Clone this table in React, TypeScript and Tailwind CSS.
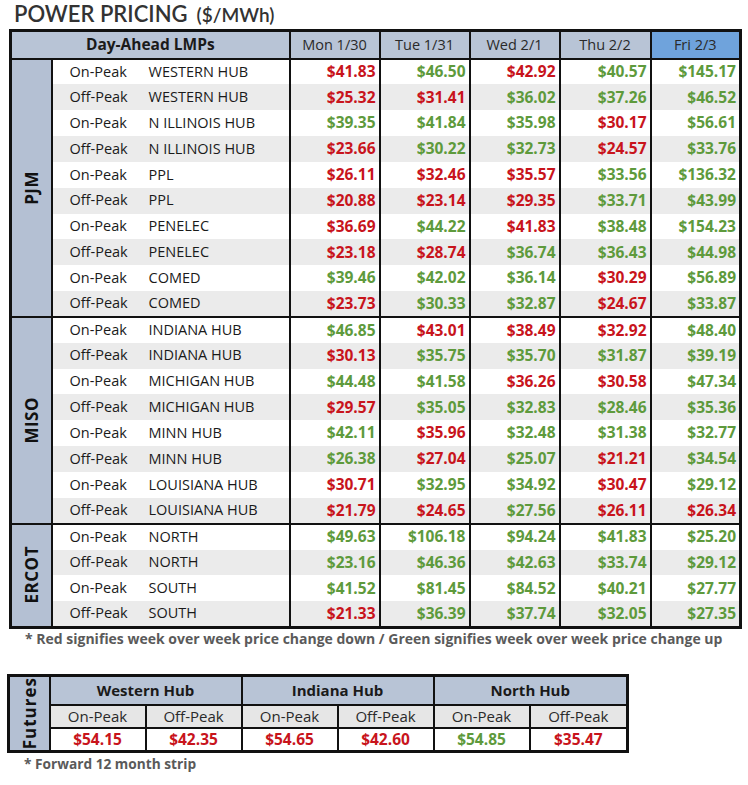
import React from "react";

type Row = { peak: string; hub: string; vals: [string, "r" | "g"][] };

const R = "r" as const;
const G = "g" as const;

const groups: { name: string; rows: Row[] }[] = [
  {
    name: "PJM",
    rows: [
      { peak: "On-Peak", hub: "WESTERN HUB", vals: [["$41.83", R], ["$46.50", G], ["$42.92", R], ["$40.57", G], ["$145.17", G]] },
      { peak: "Off-Peak", hub: "WESTERN HUB", vals: [["$25.32", R], ["$31.41", R], ["$36.02", G], ["$37.26", G], ["$46.52", G]] },
      { peak: "On-Peak", hub: "N ILLINOIS HUB", vals: [["$39.35", G], ["$41.84", G], ["$35.98", G], ["$30.17", R], ["$56.61", G]] },
      { peak: "Off-Peak", hub: "N ILLINOIS HUB", vals: [["$23.66", R], ["$30.22", G], ["$32.73", G], ["$24.57", R], ["$33.76", G]] },
      { peak: "On-Peak", hub: "PPL", vals: [["$26.11", R], ["$32.46", R], ["$35.57", R], ["$33.56", G], ["$136.32", G]] },
      { peak: "Off-Peak", hub: "PPL", vals: [["$20.88", R], ["$23.14", R], ["$29.35", R], ["$33.71", G], ["$43.99", G]] },
      { peak: "On-Peak", hub: "PENELEC", vals: [["$36.69", R], ["$44.22", G], ["$41.83", R], ["$38.48", G], ["$154.23", G]] },
      { peak: "Off-Peak", hub: "PENELEC", vals: [["$23.18", R], ["$28.74", R], ["$36.74", G], ["$36.43", G], ["$44.98", G]] },
      { peak: "On-Peak", hub: "COMED", vals: [["$39.46", G], ["$42.02", G], ["$36.14", G], ["$30.29", R], ["$56.89", G]] },
      { peak: "Off-Peak", hub: "COMED", vals: [["$23.73", R], ["$30.33", G], ["$32.87", G], ["$24.67", R], ["$33.87", G]] },
    ],
  },
  {
    name: "MISO",
    rows: [
      { peak: "On-Peak", hub: "INDIANA HUB", vals: [["$46.85", G], ["$43.01", R], ["$38.49", R], ["$32.92", R], ["$48.40", G]] },
      { peak: "Off-Peak", hub: "INDIANA HUB", vals: [["$30.13", R], ["$35.75", G], ["$35.70", G], ["$31.87", G], ["$39.19", G]] },
      { peak: "On-Peak", hub: "MICHIGAN HUB", vals: [["$44.48", G], ["$41.58", G], ["$36.26", R], ["$30.58", R], ["$47.34", G]] },
      { peak: "Off-Peak", hub: "MICHIGAN HUB", vals: [["$29.57", R], ["$35.05", G], ["$32.83", G], ["$28.46", G], ["$35.36", G]] },
      { peak: "On-Peak", hub: "MINN HUB", vals: [["$42.11", G], ["$35.96", R], ["$32.48", G], ["$31.38", G], ["$32.77", G]] },
      { peak: "Off-Peak", hub: "MINN HUB", vals: [["$26.38", G], ["$27.04", R], ["$25.07", G], ["$21.21", R], ["$34.54", G]] },
      { peak: "On-Peak", hub: "LOUISIANA HUB", vals: [["$30.71", R], ["$32.95", G], ["$34.92", G], ["$30.47", R], ["$29.12", G]] },
      { peak: "Off-Peak", hub: "LOUISIANA HUB", vals: [["$21.79", R], ["$24.65", R], ["$27.56", G], ["$26.11", R], ["$26.34", R]] },
    ],
  },
  {
    name: "ERCOT",
    rows: [
      { peak: "On-Peak", hub: "NORTH", vals: [["$49.63", G], ["$106.18", G], ["$94.24", G], ["$41.83", G], ["$25.20", G]] },
      { peak: "Off-Peak", hub: "NORTH", vals: [["$23.16", G], ["$46.36", G], ["$42.63", G], ["$33.74", G], ["$29.12", G]] },
      { peak: "On-Peak", hub: "SOUTH", vals: [["$41.52", G], ["$81.45", G], ["$84.52", G], ["$40.21", G], ["$27.77", G]] },
      { peak: "Off-Peak", hub: "SOUTH", vals: [["$21.33", R], ["$36.39", G], ["$37.74", G], ["$32.05", G], ["$27.35", G]] },
    ],
  },
];

const days = ["Mon 1/30", "Tue 1/31", "Wed 2/1", "Thu 2/2", "Fri 2/3"];

const futures: { hub: string; on: [string, "r" | "g"]; off: [string, "r" | "g"] }[] = [
  { hub: "Western Hub", on: ["$54.15", R], off: ["$42.35", R] },
  { hub: "Indiana Hub", on: ["$54.65", R], off: ["$42.60", R] },
  { hub: "North Hub", on: ["$54.85", G], off: ["$35.47", R] },
];

const color = (c: "r" | "g") => (c === "r" ? "text-[#c8141c]" : "text-[#5e9a3c]");

export default function App() {
  return (
    <div className="w-[748px] h-[785px] bg-white text-[#222] font-['Open_Sans','Liberation_Sans',sans-serif] relative">
      <div className="pl-[14px] pt-[1px] h-[29px] flex items-baseline gap-[9px] text-[#333] font-['Lato','Liberation_Sans',sans-serif]">
        <span className="text-[22px] leading-[26px] font-semibold">POWER PRICING</span>
        <span className="text-[19px] leading-[26px] font-semibold">($/MWh)</span>
      </div>

      <table className="ml-[9px] w-[730px] border-collapse border-[3px] border-[#111] table-fixed">
        <colgroup>
          <col className="w-[41px]" />
          <col className="w-[238px]" />
          <col className="w-[90px]" />
          <col className="w-[90px]" />
          <col className="w-[90px]" />
          <col className="w-[91px]" />
          <col className="w-[90px]" />
        </colgroup>
        <thead>
          <tr className="h-[28px]">
            <th colSpan={2} className="bg-[#b8c4d6] border-b-[2px] border-[#111] text-[15.5px] font-bold text-[#1a1a1a] text-center leading-none">
              Day-Ahead LMPs
            </th>
            {days.map((d, i) => (
              <th
                key={d}
                className={`${i === 4 ? "bg-[#6fa3dc]" : "bg-[#b8c4d6]"} border-l-[2px] border-b-[2px] border-[#111] text-[14.5px] font-normal text-[#2a2a2a] text-center leading-none`}
              >
                {d}
              </th>
            ))}
          </tr>
        </thead>
        <tbody>
          {groups.map((g) =>
            g.rows.map((r, ri) => (
              <tr
                key={g.name + ri}
                className={`h-[25.85px] ${ri % 2 === 1 ? "bg-[#ebebeb]" : "bg-white"} ${ri === 0 ? "border-t-[2px] border-[#111]" : ""}`}
              >
                {ri === 0 && (
                  <td rowSpan={g.rows.length} className="bg-[#b4c0d3] border-r-[2px] border-[#111] p-0 align-middle">
                    <div className="flex items-center justify-center">
                      <span className="[writing-mode:vertical-rl] rotate-180 text-[17px] font-bold text-[#111] tracking-[0.5px] leading-none">
                        {g.name}
                      </span>
                    </div>
                  </td>
                )}
                <td className="p-0 text-[14.5px] text-[#1a1a1a] leading-none">
                  <div className="flex pl-[17px]">
                    <span className="w-[79px]">{r.peak}</span>
                    <span>{r.hub}</span>
                  </div>
                </td>
                {r.vals.map(([v, c], ci) => (
                  <td
                    key={ci}
                    className={`border-l-[2px] border-[#111] text-right pr-[3px] text-[15.5px] font-bold leading-none ${color(c)}`}
                  >
                    {v}
                  </td>
                ))}
              </tr>
            ))
          )}
        </tbody>
      </table>

      <div className="pl-[25px] pt-[1px] text-[14px] font-bold text-[#5a5a5a] leading-[18px]">
        * Red signifies week over week price change down / Green signifies week over week price change up
      </div>

      <table className="ml-[7px] mt-[26px] w-[620px] border-collapse border-[3px] border-[#111] table-fixed">
        <colgroup>
          <col className="w-[41px]" />
          <col className="w-[96px]" />
          <col className="w-[96px]" />
          <col className="w-[96px]" />
          <col className="w-[96px]" />
          <col className="w-[96px]" />
          <col className="w-[98px]" />
        </colgroup>
        <tbody>
          <tr className="h-[30px]">
            <td rowSpan={3} className="bg-[#b4c0d3] border-r-[2px] border-[#111] p-0">
              <div className="flex items-center justify-center">
                <span className="[writing-mode:vertical-rl] rotate-180 text-[17px] font-bold text-[#111] tracking-[1px] leading-none">
                  Futures
                </span>
              </div>
            </td>
            {futures.map((f, i) => (
              <td
                key={f.hub}
                colSpan={2}
                className={`bg-[#b8c4d6] ${i > 0 ? "border-l-[2px]" : ""} border-b-[2px] border-[#111] text-center text-[15px] font-bold text-[#1a1a1a] leading-none`}
              >
                {f.hub}
              </td>
            ))}
          </tr>
          <tr className="h-[23px] bg-[#e6e6e6]">
            {futures.map((f, i) => (
              <React.Fragment key={f.hub}>
                <td className={`${i > 0 ? "border-l-[2px]" : ""} border-b-[2px] border-[#111] text-center text-[15px] text-[#2a2a2a] leading-none`}>
                  On-Peak
                </td>
                <td className="border-l-[2px] border-b-[2px] border-[#111] text-center text-[15px] text-[#2a2a2a] leading-none">
                  Off-Peak
                </td>
              </React.Fragment>
            ))}
          </tr>
          <tr className="h-[23px] bg-white">
            {futures.map((f, i) => (
              <React.Fragment key={f.hub}>
                <td className={`${i > 0 ? "border-l-[2px]" : ""} border-[#111] text-center text-[15.5px] font-bold leading-none ${color(f.on[1])}`}>
                  {f.on[0]}
                </td>
                <td className={`border-l-[2px] border-[#111] text-center text-[15.5px] font-bold leading-none ${color(f.off[1])}`}>
                  {f.off[0]}
                </td>
              </React.Fragment>
            ))}
          </tr>
        </tbody>
      </table>

      <div className="pl-[24px] pt-[2px] text-[13.7px] font-bold text-[#5a5a5a] leading-[18px]">
        * Forward 12 month strip
      </div>
    </div>
  );
}
